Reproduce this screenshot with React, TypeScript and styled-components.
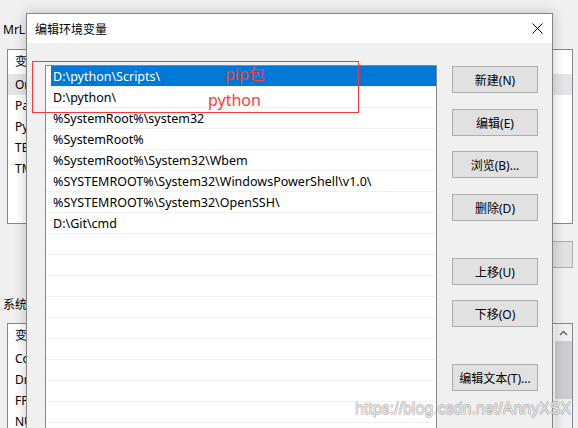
import React from 'react';
import styled, { createGlobalStyle } from 'styled-components';

const GlobalStyle = createGlobalStyle`
  html, body { margin: 0; padding: 0; background: #f0f0f0; }
  body { font-family: "Noto Sans", "Noto Sans CJK SC", sans-serif; color: #000; }
`;

const Desktop = styled.div`
  position: relative;
  width: 578px;
  height: 428px;
  overflow: hidden;
  background: #f0f0f0;
  font-size: 12px;
`;

/* ---------- window behind the dialog ---------- */
const BackWindow = styled.div`
  display: flex;
  flex-direction: column;
  height: 100%;
  box-sizing: border-box;
  padding: 22px 5px 0 3px;
`;

const SectionLabel = styled.div<{ $top?: number }>`
  height: 16px;
  line-height: 16px;
  margin-top: ${p => p.$top ?? 0}px;
  white-space: nowrap;
`;

const VarList = styled.div<{ $top: number; $height?: number }>`
  display: flex;
  margin: ${p => p.$top}px 0 0 4px;
  height: ${p => (p.$height ? `${p.$height}px` : 'auto')};
  flex: ${p => (p.$height ? 'none' : '1')};
  border: 1px solid #828790;
  box-sizing: border-box;
  background: #fff;
`;

const VarRows = styled.div`
  flex: 1;
  display: flex;
  flex-direction: column;
`;

const VarHeader = styled.div`
  height: 24px;
  line-height: 24px;
  padding-left: 7px;
`;

const VarRow = styled.div<{ $active?: boolean }>`
  height: 21px;
  line-height: 21px;
  padding-left: 7px;
  background: ${p => (p.$active ? '#e5e5e5' : 'transparent')};
  white-space: nowrap;
`;

const ScrollBar = styled.div`
  width: 17px;
  display: flex;
  flex-direction: column;
  align-items: center;
  background: #f0f0f0;
`;

const ScrollArrow = styled.div`
  height: 17px;
  display: flex;
  align-items: center;
  justify-content: center;
`;

const ScrollThumb = styled.div`
  width: 17px;
  height: 58px;
  background: #cdcdcd;
`;

const BackButtonRow = styled.div`
  display: flex;
  justify-content: flex-end;
  margin-top: 17px;
`;

const BackButton = styled.div`
  width: 76px;
  height: 27px;
  box-sizing: border-box;
  border: 1px solid #adadad;
  background: #e1e1e1;
`;

/* ---------- edit dialog ---------- */
const Dialog = styled.div`
  position: absolute;
  left: 26px;
  top: 13px;
  width: 527px;
  height: 440px;
  box-sizing: border-box;
  border: 1px solid #858585;
  background: #f0f0f0;
  box-shadow: 0 0 12px rgba(0, 0, 0, 0.22);
  display: flex;
  flex-direction: column;
`;

const TitleBar = styled.div`
  height: 29px;
  background: #fff;
  display: flex;
  align-items: center;
  justify-content: space-between;
  padding-left: 8px;
  font-size: 12px;
`;

const CloseButton = styled.div`
  width: 30px;
  height: 29px;
  display: flex;
  align-items: center;
  justify-content: center;
`;

const DialogBody = styled.div`
  flex: 1;
  display: flex;
  gap: 15px;
  padding: 22px 14px 0 18px;
`;

const PathList = styled.div`
  width: 392px;
  box-sizing: border-box;
  border: 1px solid #828790;
  background: #fff;
  display: flex;
  flex-direction: column;
  font-size: 12.5px;
`;

const PathRow = styled.div`
  height: 21px;
  flex: none;
  box-sizing: border-box;
  border-bottom: 1px solid #f0f0f0;
  display: flex;
`;

const PathCell = styled.div<{ $selected?: boolean }>`
  flex: 1;
  margin-left: 5px;
  padding: 1px 0 0 2px;
  line-height: 20px;
  white-space: nowrap;
  background: ${p => (p.$selected ? '#0078d7' : 'transparent')};
  color: ${p => (p.$selected ? '#fff' : '#000')};
`;

const ButtonColumn = styled.div`
  width: 86px;
  display: flex;
  flex-direction: column;
  padding-top: 1px;
`;

const DialogButton = styled.div<{ $space: number }>`
  height: 27px;
  margin-top: ${p => p.$space}px;
  box-sizing: border-box;
  border: 1px solid #adadad;
  background: #e1e1e1;
  display: flex;
  align-items: center;
  justify-content: center;
  font-size: 12px;
  white-space: nowrap;
`;

/* ---------- screenshot annotations ---------- */
const MarkBox = styled.div`
  position: absolute;
  left: 32px;
  top: 61px;
  width: 327px;
  height: 52px;
  box-sizing: border-box;
  border: 1px solid #f43a3a;
`;

const MarkText = styled.div<{ $left: number; $top: number }>`
  position: absolute;
  left: ${p => p.$left}px;
  top: ${p => p.$top}px;
  font-size: 16px;
  line-height: 20px;
  color: #ff3b3b;
`;

const Watermark = styled.div`
  position: absolute;
  left: 355px;
  top: 400px;
  font-family: "Liberation Sans", Arial, sans-serif;
  font-size: 16px;
  line-height: 18px;
  color: rgba(255, 255, 255, 0.8);
  text-shadow: -0.6px 0 rgba(120, 120, 120, 0.45), 0.6px 0 rgba(120, 120, 120, 0.45),
    0 -0.6px rgba(120, 120, 120, 0.45), 0 0.6px rgba(120, 120, 120, 0.45);
  white-space: nowrap;
`;

const paths = [
  'D:\\python\\Scripts\\',
  'D:\\python\\',
  '%SystemRoot%\\system32',
  '%SystemRoot%',
  '%SystemRoot%\\System32\\Wbem',
  '%SYSTEMROOT%\\System32\\WindowsPowerShell\\v1.0\\',
  '%SYSTEMROOT%\\System32\\OpenSSH\\',
  'D:\\Git\\cmd',
];

const rows = [...paths, ...Array(12).fill('')];

const buttons: [string, number][] = [
  ['新建(N)', 0],
  ['编辑(E)', 16],
  ['浏览(B)...', 15],
  ['删除(D)', 16],
  ['上移(U)', 37],
  ['下移(O)', 15],
  ['编辑文本(T)...', 37],
];

const userVars = ['OneDrive', 'Path', 'PyCharm Community Edition', 'TEMP', 'TMP'];
const sysVars = ['ComSpec', 'DriverData', 'FPS_BROWSER_APP_PROFILE_STRING', 'NUMBER_OF_PROCESSORS'];

const App: React.FC = () => {
  return (
    <Desktop>
      <GlobalStyle />
      <BackWindow>
        <SectionLabel>MrLiu 的用户变量(U)</SectionLabel>
        <VarList $top={11} $height={175}>
          <VarRows>
            <VarHeader>变量</VarHeader>
            {userVars.map((v, i) => (
              <VarRow key={v} $active={i === 0}>{v}</VarRow>
            ))}
          </VarRows>
        </VarList>
        <BackButtonRow>
          <BackButton />
        </BackButtonRow>
        <SectionLabel $top={29}>系统变量(S)</SectionLabel>
        <VarList $top={10}>
          <VarRows>
            <VarHeader>变量</VarHeader>
            {sysVars.map(v => (
              <VarRow key={v}>{v}</VarRow>
            ))}
          </VarRows>
          <ScrollBar>
            <ScrollArrow>
              <svg width="9" height="6" viewBox="0 0 9 6">
                <path d="M1 5 L4.5 1.5 L8 5" fill="none" stroke="#606060" strokeWidth="1.4" />
              </svg>
            </ScrollArrow>
            <ScrollThumb />
          </ScrollBar>
        </VarList>
      </BackWindow>

      <Dialog>
        <TitleBar>
          编辑环境变量
          <CloseButton>
            <svg width="11" height="11" viewBox="0 0 11 11">
              <path d="M0.5 0.5 L10.5 10.5 M10.5 0.5 L0.5 10.5" stroke="#000" strokeWidth="1" />
            </svg>
          </CloseButton>
        </TitleBar>
        <DialogBody>
          <PathList>
            {rows.map((p, i) => (
              <PathRow key={i}>
                <PathCell $selected={i === 0}>{p}</PathCell>
              </PathRow>
            ))}
          </PathList>
          <ButtonColumn>
            {buttons.map(([label, space]) => (
              <DialogButton key={label} $space={space}>{label}</DialogButton>
            ))}
          </ButtonColumn>
        </DialogBody>
      </Dialog>

      <MarkBox />
      <MarkText $left={225} $top={64}>pip包</MarkText>
      <MarkText $left={208} $top={90}>python</MarkText>
      <Watermark>https://blog.csdn.net/AnnyXSX</Watermark>
    </Desktop>
  );
};

export default App;
